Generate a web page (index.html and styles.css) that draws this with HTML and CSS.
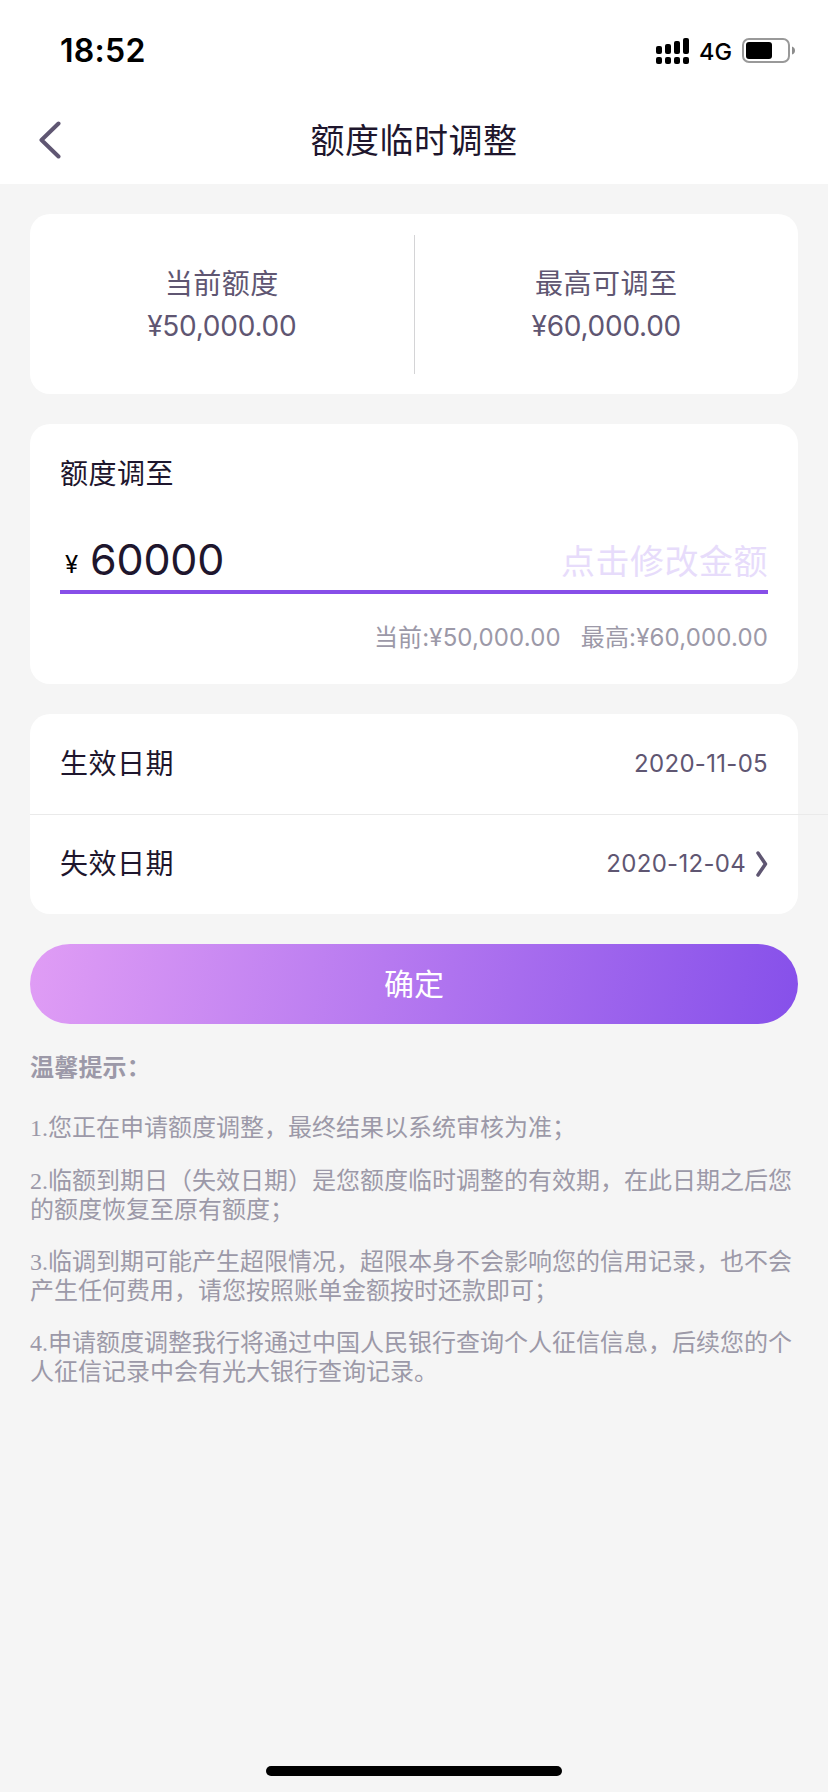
FILE: index.html
```html
<!DOCTYPE html>
<html lang="zh-CN">
<head>
<meta charset="utf-8">
<title>额度临时调整</title>
<link rel="stylesheet" href="styles.css">
</head>
<body>
<div class="screen">
  <header class="header">
    <div class="status">
      <span class="clock">18:52</span>
      <div class="status-icons">
        <svg class="signal" width="34" height="26" viewBox="0 0 34 26">
          <rect x="0" y="8" width="6" height="8" rx="2"/><rect x="9" y="6" width="6" height="10" rx="2"/><rect x="18" y="3" width="6" height="13" rx="2"/><rect x="27" y="0" width="6" height="16" rx="2"/>
          <rect x="0" y="19" width="6" height="7" rx="2"/><rect x="9" y="19" width="6" height="7" rx="2"/><rect x="18" y="19" width="6" height="7" rx="2"/><rect x="27" y="19" width="6" height="7" rx="2"/>
        </svg>
        <span class="network">4G</span>
        <svg class="battery" width="53" height="25" viewBox="0 0 53 25">
          <rect x="1" y="1" width="46" height="23" rx="6" fill="none" stroke="#999" stroke-width="2"/>
          <rect x="4" y="4" width="26" height="17" rx="3"/>
          <path d="M50 8.500Q53 9.500 53 12.500Q53 15.500 50 16.500Z" fill="#8c8c8c"/>
        </svg>
      </div>
    </div>
    <nav class="nav">
      <svg class="back" width="22" height="38" viewBox="0 0 22 38"><path d="M19.500 2.500L2.500 19L19.500 35.500"/></svg>
      <h1 class="title">额度临时调整</h1>
    </nav>
  </header>

  <main class="content">
    <section class="card summary">
      <div class="summary-item"><span>当前额度</span><span class="amount">¥50,000.00</span></div>
      <div class="summary-line"></div>
      <div class="summary-item"><span>最高可调至</span><span class="amount">¥60,000.00</span></div>
    </section>

    <section class="card adjust">
      <div class="label">额度调至</div>
      <div class="field">
        <span class="yen">¥</span>
        <span class="value">60000</span>
        <span class="placeholder">点击修改金额</span>
      </div>
      <div class="hint"><span>当前:¥50,000.00</span><span>最高:¥60,000.00</span></div>
    </section>

    <section class="card dates">
      <div class="row"><span class="label">生效日期</span><span class="date">2020-11-05</span></div>
      <div class="row-line"></div>
      <div class="row"><span class="label">失效日期</span><span class="date">2020-12-04</span>
        <svg class="more" width="12" height="26" viewBox="0 0 12 26"><path d="M2 2L9.500 13L2 24"/></svg>
      </div>
    </section>

    <button class="submit">确定</button>

    <section class="tips">
      <h2 class="tips-title">温馨提示：</h2>
      <p class="tip tip-first">1.您正在申请额度调整，最终结果以系统审核为准；</p>
      <p class="tip">2.临额到期日（失效日期）是您额度临时调整的有效期，在此日期之后您<br>的额度恢复至原有额度；</p>
      <p class="tip">3.临调到期可能产生超限情况，超限本身不会影响您的信用记录，也不会<br>产生任何费用，请您按照账单金额按时还款即可；</p>
      <p class="tip">4.申请额度调整我行将通过中国人民银行查询个人征信信息，后续您的个<br>人征信记录中会有光大银行查询记录。</p>
    </section>
  </main>
  <div class="home-bar"></div>
</div>
</body>
</html>
```
FILE: styles.css
```css
* { box-sizing: border-box; }
body {
  margin: 0;
  background: #f5f5f5;
  font-family: Inter, "Noto Sans CJK SC", sans-serif;
  font-weight: 400;
  color: #1e162d;
}
.screen {
  width: 828px;
  height: 1792px;
  display: flex;
  flex-direction: column;
  overflow: hidden;
}
.header { height: 184px; background: #fff; }
.status {
  height: 96px;
  padding: 5px 33px 0 60px;
  display: flex;
  align-items: center;
  justify-content: space-between;
  color: #000;
}
.clock { font-size: 32px; line-height: 36px; font-weight: 600; letter-spacing: 0.3px; }
.status-icons { display: flex; align-items: center; }
.network { font-size: 23.5px; line-height: 28px; font-weight: 500; margin: 2px 10px 0 9px; }
.nav {
  height: 88px;
  padding: 0 39px;
  display: grid;
  grid-template-columns: 22px 1fr 22px;
  align-items: center;
}
.back, .more { fill: none; stroke: #5f5672; stroke-linecap: round; stroke-linejoin: round; }
.back { stroke-width: 4; }
.more { stroke-width: 3.500; margin-left: 10px; }
.title {
  margin: 0;
  padding-top: 2px;
  text-align: center;
  font-size: 34px;
  line-height: 40px;
  font-weight: 400;
  letter-spacing: 0.500px;
}
.content { flex: 1; padding: 30px 30px 0; }
.card { background: #fff; border-radius: 20px; margin-bottom: 30px; }
.summary { height: 180px; display: flex; align-items: center; }
.summary-item {
  flex: 1;
  display: flex;
  flex-direction: column;
  align-items: center;
  padding-top: 2px;
  font-size: 28px;
  line-height: 42px;
  letter-spacing: 0.500px;
  color: #5f5672;
}
.amount { letter-spacing: -0.250px; }
.summary-line { width: 1px; height: 139px; background: #d4d4d6; }
.adjust { height: 260px; padding: 30px 30px 0; }
.label { font-size: 28px; line-height: 40px; letter-spacing: 0.500px; }
.field {
  height: 100px;
  padding: 0 0 3px 5px;
  display: flex;
  align-items: flex-end;
  border-bottom: 4px solid #874fe8;
}
.yen { font-size: 24px; line-height: 44px; color: #000; width: 25px; }
.value { font-size: 43px; line-height: 56px; letter-spacing: -0.200px; flex: 1; }
.placeholder { font-size: 34px; line-height: 51px; letter-spacing: 0.500px; color: #e7dcfb; }
.hint {
  margin-top: 29px;
  display: flex;
  justify-content: flex-end;
  gap: 20px;
  font-size: 24px;
  line-height: 30px;
  letter-spacing: 0.150px;
  color: #9c99a8;
}
.dates { height: 200px; }
.row { height: 100px; padding: 0 30px; display: flex; align-items: center; }
.row-line { height: 1px; margin: 0 -30px -1px 0; background: #eaeaea; }
.date { margin-left: auto; font-size: 24px; line-height: 30px; letter-spacing: 0.300px; color: #5f5672; }
.submit {
  display: block;
  width: 100%;
  height: 80px;
  padding: 0;
  border: 0;
  border-radius: 40px;
  background: linear-gradient(100deg, #e09df5 0%, #8650ea 100%);
  color: #fff;
  font: 400 30px/80px Inter, "Noto Sans CJK SC", sans-serif;
}
.tips {
  padding-top: 30px;
  color: #9c99a8;
  font-family: "Liberation Serif", "Noto Sans CJK SC", serif;
  font-size: 24px;
  line-height: 29px;
}
.tips-title { margin: 0; font-size: 24px; line-height: 29px; font-weight: 600; letter-spacing: 0.200px; }
.tip { margin: 23px 0 0; white-space: nowrap; }
.tip-first { margin: 31px 0 24px; }
.home-bar { width: 296px; height: 10px; margin: 0 auto 16px; border-radius: 5px; background: #000; }
```
